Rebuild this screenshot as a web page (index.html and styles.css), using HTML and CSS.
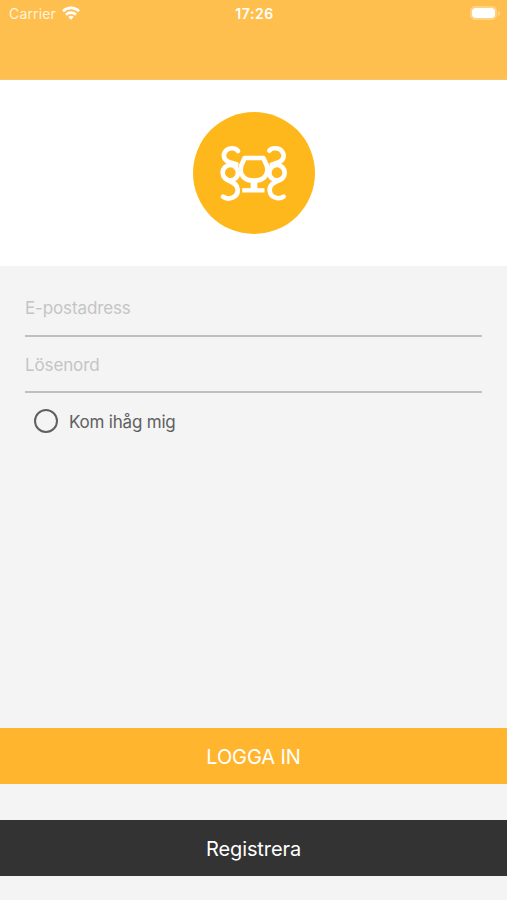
FILE: index.html
```html
<!DOCTYPE html>
<html lang="sv">
<head>
    <meta charset="UTF-8">
    <meta name="viewport" content="width=device-width, initial-scale=1.0">
    <title>Logga in</title>
    <link rel="stylesheet" href="styles.css">
</head>
<body>
    <header class="topbar">
        <div class="carrier">
            <span>Carrier</span>
            <svg class="wifi" viewBox="0 0 18 14" fill="none" stroke="#fff" stroke-width="2.7">
                <path d="M1 5.2a11.4 11.4 0 0 1 16 0"/>
                <path d="M4 8.7a7.2 7.2 0 0 1 10 0"/>
                <path d="M9 13.8L6.3 11a3.9 3.9 0 0 1 5.4 0z" fill="#fff" stroke="none"/>
            </svg>
        </div>
        <div class="clock">17:26</div>
        <div class="battery-wrap">
            <div class="battery"></div>
            <div class="battery-tip"></div>
        </div>
    </header>

    <div class="logo-area">
        <svg class="logo" viewBox="0 0 366 366" fill="none" stroke="#fff" stroke-width="14" stroke-linecap="round" stroke-linejoin="round">
            <circle cx="183" cy="183" r="183" fill="#ffb81c" stroke="none"/>
            <!-- left ornament -->
            <path d="M135 117C128 106 107 106 98 117C88 130 93 144 107 150L130 157"/>
            <circle cx="112" cy="182" r="23"/>
            <path d="M97 199C106 209 132 209 134 232C136 257 105 266 90 254"/>
            <!-- right ornament -->
            <path d="M229 116C236 106 258 106 267 118C277 131 271 145 257 151L236 158"/>
            <circle cx="252" cy="182" r="23"/>
            <path d="M268 199C257 209 231 210 230 233C230 257 257 264 272 254"/>
            <!-- glass -->
            <path d="M155 138H211L221 160C229 189 212 206 183 206C154 206 137 189 145 160Z" fill="#ffb81c"/>
            <path d="M183 208V232" stroke-width="20" stroke-linecap="butt"/>
            <path d="M154 235H208" stroke-width="13" stroke-linecap="square"/>
        </svg>
    </div>

    <form class="login-form">
        <div class="fields">
            <input type="email" class="field" placeholder="E-postadress">
            <input type="password" class="field" placeholder="Lösenord">
            <label class="remember">
                <input type="checkbox" class="remember-box">
                <span class="remember-text">Kom ihåg mig</span>
            </label>
        </div>
        <button type="button" class="button button-login">LOGGA IN</button>
        <button type="button" class="button button-register">Registrera</button>
    </form>
</body>
</html>
```

FILE: styles.css
```css
* {
    box-sizing: border-box;
}
body {
    margin: 0;
    height: 900px;
    display: flex;
    flex-direction: column;
    overflow: hidden;
    background: #f4f4f4;
    font-family: Inter, "Liberation Sans", sans-serif;
}
.topbar {
    display: grid;
    grid-template-columns: 1fr auto 1fr;
    align-items: start;
    height: 80px;
    padding: 4px 7px 0 9px;
    background: #ffbf4f;
    border-bottom: 1px solid #f5c473;
    color: #fff;
    font-size: 14px;
    line-height: 20px;
}
.carrier {
    display: flex;
    align-items: center;
    gap: 6px;
    color: #fff3dc;
    letter-spacing: 0.15px;
}
.wifi {
    width: 18px;
    height: 14px;
    margin-top: -2px;
}
.clock {
    font-weight: 600;
    letter-spacing: 0.6px;
}
.battery-wrap {
    display: flex;
    justify-content: flex-end;
    align-items: center;
    gap: 1px;
    padding-top: 2px;
}
.battery {
    width: 27px;
    height: 14px;
    border: 2px solid #ffd280;
    border-radius: 5px;
    background: #fff;
    background-clip: padding-box;
}
.battery-tip {
    width: 2px;
    height: 5px;
    border-radius: 0 2px 2px 0;
    background: #ffd280;
}
.logo-area {
    display: flex;
    justify-content: center;
    height: 186px;
    padding-top: 32px;
    background: #fff;
}
.logo {
    width: 122px;
    height: 122px;
}
.login-form {
    flex: 1;
    display: flex;
    flex-direction: column;
    padding-bottom: 24px;
}
.fields {
    flex: 1;
    display: flex;
    flex-direction: column;
    padding: 14px 25px 0;
}
.field {
    height: 57px;
    padding: 1px 0 0;
    border: 0;
    border-bottom: 2px solid #c0c0c0;
    border-radius: 0;
    outline: none;
    background: transparent;
    color: #555;
    font-family: inherit;
    font-size: 17px;
    letter-spacing: -0.13px;
}
.field + .field {
    height: 56px;
}
.field::placeholder {
    color: #c4c4c4;
    opacity: 1;
}
.remember {
    display: flex;
    align-items: center;
    gap: 11px;
    height: 56px;
    padding-left: 9px;
    color: #606060;
    font-size: 17px;
    letter-spacing: -0.2px;
}
.remember-text {
    padding-top: 1px;
}
.remember-box {
    appearance: none;
    width: 24px;
    height: 24px;
    margin: 0;
    border: 2px solid #606060;
    border-radius: 50%;
}
.remember-box:checked {
    background: #ffb62e;
}
.button {
    width: 100%;
    height: 56px;
    padding: 1px 0 0;
    border: 0;
    color: #fff;
    font-family: inherit;
    font-size: 20px;
    letter-spacing: -0.1px;
}
.button-login {
    margin-bottom: 36px;
    background: #ffb62e;
}
.button-register {
    background: #333;
}
```
